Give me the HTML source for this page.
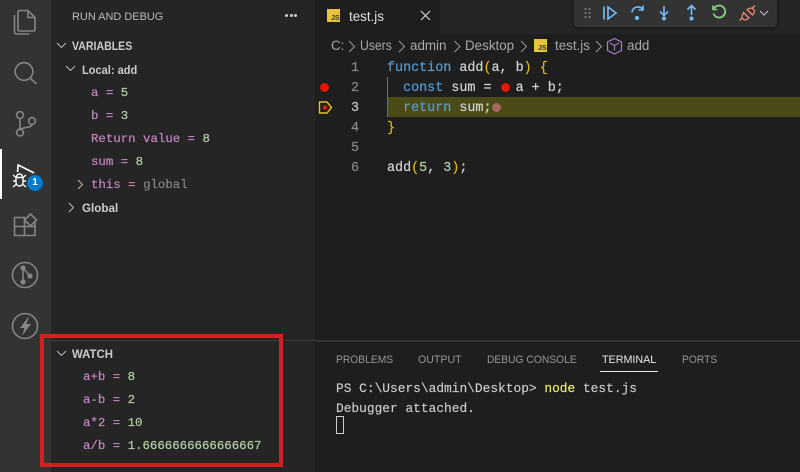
<!DOCTYPE html>
<html><head><meta charset="utf-8">
<style>
html,body{margin:0;padding:0;background:#1e1e1e}
#r{position:relative;width:800px;height:472px;overflow:hidden;background:#1e1e1e;font-family:"Liberation Sans",sans-serif}
#r div{position:absolute;white-space:pre}
.m{font-family:"Liberation Mono",monospace;font-size:12.4px;line-height:16px;color:#c586c0;-webkit-text-stroke:.2px}
.v{color:#b5cea8}
.e{font-family:"Liberation Mono",monospace;font-size:13.4px;line-height:20px;color:#d4d4d4;left:387px;-webkit-text-stroke:.2px}
.k{color:#569cd6}.y{color:#e2b714}.n{color:#b5cea8}
.l{font-family:"Liberation Mono",monospace;font-size:13.4px;line-height:20px;color:#858585;width:30px;text-align:right;left:329px;-webkit-text-stroke:.2px}
.b{font-size:12px;line-height:16px;font-weight:bold;color:#cccccc;transform-origin:0 0}
.t{font-size:11.3px;line-height:16px;color:#969696;transform-origin:0 0;transform:scaleX(.91)}
.c{font-size:13.4px;line-height:18px;color:#a9a9a9;transform-origin:0 0}
.tm{font-family:"Liberation Mono",monospace;font-size:12.86px;line-height:18px;color:#cccccc;left:336px;-webkit-text-stroke:.15px}
svg{position:absolute;overflow:visible}
</style></head><body>
<div id="r">
<div style="left:0;top:0;width:51px;height:472px;background:#333333"></div>
<div style="left:51px;top:0;width:264px;height:472px;background:#252526"></div>
<div style="left:315px;top:0;width:485px;height:34px;background:#252526"></div>
<div style="left:315px;top:0;width:125px;height:34px;background:#1e1e1e"></div>
<div style="left:51px;top:340px;width:264px;height:1px;background:#3a3a3a"></div>
<div style="left:315px;top:340px;width:485px;height:2px;background:#333"></div>

<!-- activity bar -->
<div style="left:0;top:149px;width:2px;height:50px;background:#fff"></div>
<svg style="left:0;top:0" width="51" height="350" fill="none" stroke="#858585" stroke-width="1.6">
<path d="M19.500 10.500h8.500l7 7v12a1.500 1.500 0 0 1-1.500 1.500h-14a1.500 1.500 0 0 1-1.500-1.500v-17.500a1.500 1.500 0 0 1 1.500-1.500z M28 10.500v7h7"/><path d="M14.500 15v17a2 2 0 0 0 2 2h13"/>
<circle cx="24" cy="71.500" r="8.800"/><path d="M30 78l6.500 6"/>
<circle cx="20" cy="115" r="3.400"/><circle cx="20" cy="132.500" r="3.400"/><circle cx="32" cy="121" r="3.400"/><path d="M20 118.500v10.500M32 124.500c0 4-12 2-12 6"/>
<path d="M14.500 217.500h10v9h-10zM14.500 226.500h10v9h-10zM24.500 226.500h10.500v9h-10.500zM35 226.500v-4"/><path d="M24.500 220l6-6 6 6-6 6z"/>
<circle cx="25" cy="275" r="12.500"/><circle cx="23" cy="268" r="1.800" fill="#858585"/><circle cx="23" cy="282" r="1.800" fill="#858585"/><circle cx="30" cy="276" r="1.800" fill="#858585"/><path d="M23 268v14M23 268l7 8"/>
<circle cx="25" cy="326" r="12.500"/><path d="M29 316l-9 12h4.500l-2.500 8 9-12h-4.500z" fill="#858585" stroke="none"/>
</svg>
<svg style="left:0;top:0" width="51" height="200" fill="none" stroke="#fff" stroke-width="1.400">
<path d="M17.500 172l.7-7 16 8" stroke-width="1.700"/>
<path d="M13 175l3 2.500M13 181h3M13 187l3-2.500M26 175l-3 2.500M26 181h-3M26 187l-3-2.500"/>
<path d="M16 177.500h7v5a3.500 3.500 0 0 1-7 0z"/><path d="M16.500 177a3 3 0 0 1 6 0"/>
</svg>
<div style="left:27px;top:175px;width:16px;height:16px;border-radius:8px;background:#007acc;color:#fff;font-size:10px;line-height:16px;text-align:center;font-weight:bold">1</div>

<!-- sidebar -->
<div class="t" style="left:72px;top:9px;color:#bbbbbb;transform:scaleX(.97)">RUN AND DEBUG</div>
<div style="left:285px;top:14px;width:3px;height:3px;border-radius:2px;background:#ccc"></div>
<div style="left:289.500px;top:14px;width:3px;height:3px;border-radius:2px;background:#ccc"></div>
<div style="left:294px;top:14px;width:3px;height:3px;border-radius:2px;background:#ccc"></div>
<svg style="left:0;top:0" width="320" height="472" fill="none" stroke="#c5c5c5" stroke-width=".9">
<path d="M57 43l4.500 4.500 4.500-4.500"/>
<path d="M66 66l4.500 4.500 4.500-4.500"/>
<path d="M78 180l4.500 4.500-4.500 4.500"/>
<path d="M69 203l4.500 4.500-4.500 4.500"/>
<path d="M57 351l4.500 4.500 4.500-4.500"/>
</svg>
<div class="b" style="left:72px;top:38px;transform:scaleX(.88)">VARIABLES</div>
<div class="b" style="left:82px;top:61.500px;transform:scaleX(.92)">Local: add</div>
<div class="m" style="left:91px;top:85px">a = <span class="v">5</span></div>
<div class="m" style="left:91px;top:108px">b = <span class="v">3</span></div>
<div class="m" style="left:91px;top:131px">Return value = <span class="v">8</span></div>
<div class="m" style="left:91px;top:154px">sum = <span class="v">8</span></div>
<div class="m" style="left:91px;top:177px">this = <span style="color:#858585">global</span></div>
<div class="b" style="left:82px;top:200px;transform:scaleX(.97)">Global</div>

<div class="b" style="left:72px;top:346px;transform:scaleX(.95)">WATCH</div>
<div class="m" style="left:83px;top:369px">a+b = <span class="v">8</span></div>
<div class="m" style="left:83px;top:392px">a-b = <span class="v">2</span></div>
<div class="m" style="left:83px;top:415px">a*2 = <span class="v">10</span></div>
<div class="m" style="left:83px;top:438px">a/b = <span class="v">1.6666666666666667</span></div>
<div style="left:40px;top:334px;width:235px;height:125px;border:4px solid #d42020"></div>

<!-- tab -->
<div style="left:327px;top:9px;width:13px;height:13px;background:#e8c43a"></div>
<div style="left:331px;top:15px;font:bold 7px/8px 'Liberation Sans',sans-serif;color:#333">JS</div>
<div style="left:349px;top:8px;font-size:13.4px;line-height:18px;color:#e0e0e0">test.js</div>
<svg style="left:0;top:0" width="440" height="34" fill="none" stroke="#d0d0d0" stroke-width="1.200"><path d="M421 11l9 9M430 11l-9 9"/></svg>

<!-- breadcrumbs -->
<div class="c" style="left:331px;top:37px">C:</div>
<div class="c" style="left:360px;top:37px;transform:scaleX(.91)">Users</div>
<div class="c" style="left:410px;top:37px">admin</div>
<div class="c" style="left:465px;top:37px">Desktop</div>
<div style="left:534px;top:39px;width:13px;height:13px;background:#e8c43a"></div>
<div style="left:538px;top:45px;font:bold 7px/8px 'Liberation Sans',sans-serif;color:#333">JS</div>
<div class="c" style="left:555px;top:37px">test.js</div>
<div class="c" style="left:627px;top:37px">add</div>
<svg style="left:0;top:0" width="800" height="60" fill="none" stroke="#a0a0a0" stroke-width=".9">
<path d="M349 41l5.500 5.500-5.500 5.500M399 41l5.500 5.500-5.500 5.500M454.500 41l5.500 5.500-5.500 5.500M521 41l5.500 5.500-5.500 5.500M596 41l5.500 5.500-5.500 5.500"/>
<path d="M614.500 38.500l7 3.500v8.500l-7 3.500-7-3.500v-8.500z" stroke="#a67cd8" stroke-width="1.200"/><path d="M610 43l4.500 2.500 4.500-2.500M614.500 45.500v5" stroke="#a67cd8" stroke-width="1.100"/>
</svg>

<!-- editor -->
<div style="left:387px;top:97px;width:413px;height:20px;background:#4b4b18"></div>
<div style="left:387px;top:77px;width:1px;height:40px;background:#6e6e6e"></div>
<div class="l" style="top:59px">1</div>
<div class="l" style="top:79px">2</div>
<div class="l" style="top:99px;color:#c6c6c6">3</div>
<div class="l" style="top:119px">4</div>
<div class="l" style="top:139px">5</div>
<div class="l" style="top:159px">6</div>
<div class="e" style="top:59px"><span class="k">function</span> add<span class="y">(</span>a, b<span class="y">)</span> <span class="y">{</span></div>
<div class="e" style="top:79px">  <span class="k">const</span> sum =   a + b;</div>
<div class="e" style="top:99px">  <span class="k">return</span> sum;</div>
<div class="e" style="top:119px"><span class="y">}</span></div>
<div class="e" style="top:159px">add<span class="y">(</span><span class="n">5</span>, <span class="n">3</span><span class="y">)</span>;</div>
<div style="left:320px;top:83px;width:9px;height:9px;border-radius:5px;background:#e51400"></div>
<div style="left:500.500px;top:83px;width:9px;height:9px;border-radius:5px;background:#e51400"></div>
<div style="left:491.500px;top:102.500px;width:9px;height:9px;border-radius:5px;background:#a5675f"></div>
<svg style="left:0;top:0" width="340" height="120" fill="none"><path d="M319.500 102h7.500l4.500 5.500-4.500 5.500h-7.500z" stroke="#e8bd2d" stroke-width="1.400"/><circle cx="325" cy="107.500" r="2.400" fill="#d01a0c"/></svg>

<!-- debug toolbar -->
<div style="left:574px;top:-4px;width:203px;height:31px;background:#333333;border-radius:4px;box-shadow:0 1px 4px rgba(0,0,0,.5)"></div>
<svg style="left:0;top:0" width="800" height="30" fill="none" stroke="#75beff" stroke-width="1.600">
<g fill="#777" stroke="none"><circle cx="585.500" cy="9" r="1.100"/><circle cx="589.500" cy="9" r="1.100"/><circle cx="585.500" cy="13" r="1.100"/><circle cx="589.500" cy="13" r="1.100"/><circle cx="585.500" cy="17" r="1.100"/><circle cx="589.500" cy="17" r="1.100"/></g>
<path d="M604 6.500v13"/><path d="M608 7l8 6-8 6z"/>
<path d="M632 12.500a6 6 0 0 1 10.500-3.500M643 5.500v4.500h-4.500"/><circle cx="637" cy="18" r="2" fill="#75beff" stroke="none"/>
<path d="M664 6v9M660 11.500l4 4 4-4"/><circle cx="664" cy="18.500" r="2" fill="#75beff" stroke="none"/>
<path d="M691.500 15V6M687.500 9.500l4-4 4 4"/><circle cx="691.500" cy="18.500" r="2" fill="#75beff" stroke="none"/>
<path d="M714 8.500a6 6 0 1 1-.5 5" stroke="#89d185" stroke-width="1.800"/><path d="M713 5.500v4h4" stroke="#89d185"/>
<g stroke="#f48771" stroke-width="1.300"><path d="M739.500 20.500l3-3M755 5.500l-3 3M743.500 12.500l5.500 5.500-2.500 1.500a2.500 2.500 0 0 1-3.500-.5l-.5-1a2.500 2.500 0 0 1 .5-3.500zM747 9.500l5.500 5.500 1.500-2a3 3 0 0 0-.5-3.500l-.5-.5a3 3 0 0 0-3.500-.5z"/></g>
<path d="M760 11l4 4 4-4" stroke="#c5c5c5" stroke-width="1"/>
</svg>

<!-- panel -->
<div class="t" style="left:336px;top:352px">PROBLEMS</div>
<div class="t" style="left:418px;top:352px;transform:scaleX(.94)">OUTPUT</div>
<div class="t" style="left:487px;top:352px">DEBUG CONSOLE</div>
<div class="t" style="left:602px;top:352px;color:#e7e7e7;transform:scaleX(.95)">TERMINAL</div>
<div class="t" style="left:682px;top:352px">PORTS</div>
<div style="left:600px;top:371px;width:58px;height:1px;background:#e7e7e7"></div>
<div class="tm" style="top:380px">PS C:\Users\admin\Desktop&gt; <span style="color:#f1f16a">node</span> test.js</div>
<div class="tm" style="top:400px">Debugger attached.</div>
<div style="left:336px;top:416px;width:6px;height:16px;border:1px solid #ccc"></div>
</div>
</body></html>
